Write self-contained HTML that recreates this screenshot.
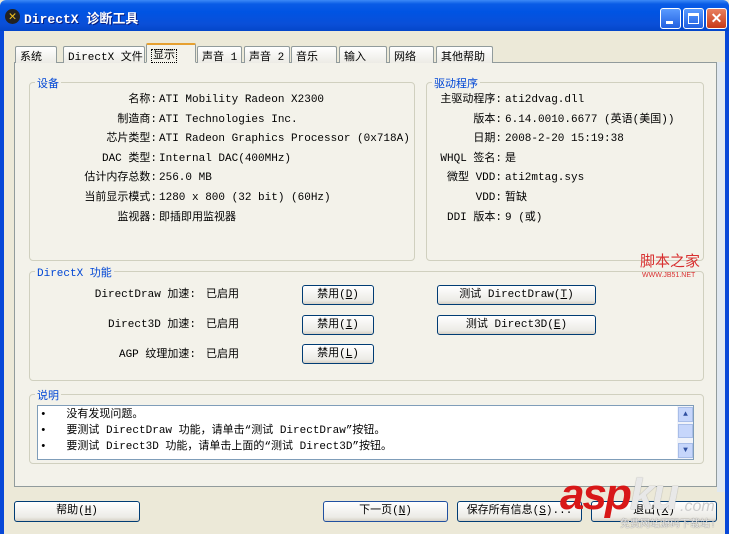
<!DOCTYPE html>
<html><head><meta charset="utf-8"><style>
*{margin:0;padding:0;box-sizing:border-box}
body{width:729px;height:534px;overflow:hidden;background:#ece9d8;position:relative;font-family:"Liberation Mono","Noto Sans CJK SC",monospace;font-size:11px;color:#000}
.a{position:absolute;white-space:nowrap}
#title{left:0;top:0;width:729px;height:31px;background:linear-gradient(#3d8af7 0,#0a5ce6 4px,#0054e3 12px,#0a4fd8 24px,#0446c9 31px);border-radius:6px 6px 0 0}
#bl{left:0;top:31px;width:4px;height:503px;background:#0848d8}
#br{right:0;top:31px;width:4px;height:503px;background:#0848d8}
.tt{color:#fff;font-weight:bold;font-size:13px;font-family:"Liberation Mono","Noto Sans CJK SC",monospace;text-shadow:1px 1px #0a1e80}
.wb{top:8px;width:21px;height:21px;border:1px solid #fff;border-radius:3px;background:linear-gradient(#5a9bff,#2160e0)}
.tab{top:46px;height:17px;border:1px solid #919b9c;border-bottom:none;background:linear-gradient(#fff,#ecebe5);padding:1px 4px 0;border-radius:2px 2px 0 0}
#panel{left:14px;top:62px;width:703px;height:425px;border:1px solid #919b9c;background:#f3f2ea}
.grp{border:1px solid #d0d0bf;border-radius:4px}
.gt{color:#0046d5;background:#f3f2ea;padding:0 2px}
.r{text-align:right}
.btn{border:1px solid #003c74;border-radius:3px;background:linear-gradient(#fff,#ecebe6 80%,#d6d0c5);text-align:center;line-height:18px}
</style></head><body>
<div class="a" id="title"></div>
<div class="a" style="left:5px;top:9px;width:15px;height:15px;border-radius:50%;background:#222;color:#f0c020;font-size:13px;line-height:15px;text-align:center;font-weight:bold">✕</div>
<div class="a tt" style="left:24px;top:8px">DirectX 诊断工具</div>
<div class="a wb" style="left:660px"><div style="position:absolute;left:5px;top:12px;width:7px;height:3px;background:#fff"></div></div>
<div class="a wb" style="left:683px"><div style="position:absolute;left:4px;top:4px;width:11px;height:11px;border:1px solid #fff;border-top-width:3px"></div></div>
<div class="a wb" style="left:706px;background:linear-gradient(#e88060,#c83a18);color:#fff;font-weight:bold;text-align:center;line-height:19px;font-size:14px;font-family:'Liberation Sans',sans-serif">✕</div>
<div class="a" id="bl"></div><div class="a" id="br"></div>
<div class="a" id="panel"></div>
<div class="a" style="left:717px;top:62px;width:8px;height:430px;background:#e0e8f0"></div>
<div class="a tab" style="left:15px;width:42px">系统</div>
<div class="a tab" style="left:63px;width:82px">DirectX 文件</div>
<div class="a tab" style="left:146px;width:50px;top:43px;height:20px;background:#f3f2ea;border-top:2px solid #e6a030;border-bottom:1px solid #f3f2ea"><span style="border:1px dotted #000;padding:0 1px">显示</span></div>
<div class="a tab" style="left:197px;width:45px">声音 1</div>
<div class="a tab" style="left:244px;width:46px">声音 2</div>
<div class="a tab" style="left:291px;width:46px">音乐</div>
<div class="a tab" style="left:339px;width:48px">输入</div>
<div class="a tab" style="left:389px;width:45px">网络</div>
<div class="a tab" style="left:436px;width:57px">其他帮助</div>

<div class="a grp" style="left:29px;top:82px;width:386px;height:179px"></div>
<div class="a gt" style="left:35px;top:75px">设备</div>
<div class="a grp" style="left:426px;top:82px;width:278px;height:179px"></div>
<div class="a gt" style="left:432px;top:75px">驱动程序</div>
<div class="a grp" style="left:29px;top:271px;width:675px;height:110px"></div>
<div class="a gt" style="left:35px;top:264px">DirectX 功能</div>
<div class="a grp" style="left:29px;top:394px;width:675px;height:70px"></div>
<div class="a gt" style="left:35px;top:387px">说明</div>

<div class="a r" style="left:40px;top:91px;width:117px;line-height:19.6px">名称:<br>制造商:<br>芯片类型:<br>DAC 类型:<br>估计内存总数:<br>当前显示模式:<br>监视器:</div>
<div class="a" style="left:159px;top:91px;line-height:19.6px">ATI Mobility Radeon X2300<br>ATI Technologies Inc.<br>ATI Radeon Graphics Processor (0x718A)<br>Internal DAC(400MHz)<br>256.0 MB<br>1280 x 800 (32 bit) (60Hz)<br>即插即用监视器</div>
<div class="a r" style="left:420px;top:91px;width:82px;line-height:19.6px">主驱动程序:<br>版本:<br>日期:<br>WHQL 签名:<br>微型 VDD:<br>VDD:<br>DDI 版本:</div>
<div class="a" style="left:505px;top:91px;line-height:19.6px">ati2dvag.dll<br>6.14.0010.6677 (英语(美国))<br>2008-2-20 15:19:38<br>是<br>ati2mtag.sys<br>暂缺<br>9 (或)</div>

<div class="a r" style="left:60px;top:281px;width:136px;line-height:29.8px">DirectDraw 加速:<br>Direct3D 加速:<br>AGP 纹理加速:</div>
<div class="a" style="left:206px;top:281px;line-height:29.8px">已启用<br>已启用<br>已启用</div>
<div class="a btn" style="left:302px;top:285px;width:72px;height:20px">禁用(<u>D</u>)</div>
<div class="a btn" style="left:302px;top:315px;width:72px;height:20px">禁用(<u>I</u>)</div>
<div class="a btn" style="left:302px;top:344px;width:72px;height:20px">禁用(<u>L</u>)</div>
<div class="a btn" style="left:437px;top:285px;width:159px;height:20px">测试 DirectDraw(<u>T</u>)</div>
<div class="a btn" style="left:437px;top:315px;width:159px;height:20px">测试 Direct3D(<u>E</u>)</div>
<div class="a" style="left:640px;top:250px;color:#d83030;font-family:'Noto Sans CJK SC',sans-serif;font-size:15px">脚本之家</div>
<div class="a" style="left:642px;top:272px;color:#d83030;font-family:'Liberation Sans',sans-serif;font-size:7px">WWW.JB51.NET</div>

<div class="a" style="left:37px;top:405px;width:657px;height:55px;background:#fff;border:1px solid #7f9db9"></div>
<div class="a" style="left:40px;top:407px;line-height:16px">•&nbsp;&nbsp;&nbsp;没有发现问题。<br>•&nbsp;&nbsp;&nbsp;要测试 DirectDraw 功能，请单击“测试 DirectDraw”按钮。<br>•&nbsp;&nbsp;&nbsp;要测试 Direct3D 功能，请单击上面的“测试 Direct3D”按钮。</div>
<div class="a" style="left:677px;top:406px;width:16px;height:53px;background:#f0f3fa"></div>
<div class="a" style="left:678px;top:407px;width:15px;height:15px;background:#c6d6fb;border:1px solid #a8bde8;color:#3050a0;font-size:8px;text-align:center;line-height:13px">▲</div>
<div class="a" style="left:678px;top:424px;width:15px;height:14px;background:#c6d6fb;border:1px solid #a8bde8"></div>
<div class="a" style="left:678px;top:443px;width:15px;height:15px;background:#c6d6fb;border:1px solid #a8bde8;color:#3050a0;font-size:8px;text-align:center;line-height:13px">▼</div>

<div class="a btn" style="left:14px;top:501px;width:126px;height:21px">帮助(<u>H</u>)</div>
<div class="a btn" style="left:323px;top:501px;width:125px;height:21px;border-color:#2050a0">下一页(<u>N</u>)</div>
<div class="a btn" style="left:457px;top:501px;width:125px;height:21px">保存所有信息(<u>S</u>)...</div>
<div class="a btn" style="left:591px;top:501px;width:126px;height:21px">退出(<u>X</u>)</div>
<div class="a" style="left:560px;top:470px;color:#d81818;font-family:'Liberation Sans',sans-serif;font-weight:bold;font-style:italic;font-size:44px;letter-spacing:-2px">asp<span style="color:#e8e8e8;text-shadow:0 0 1px #888">ku</span></div>
<div class="a" style="left:680px;top:498px;color:#ccc;font-family:'Liberation Sans',sans-serif;font-style:italic;font-size:16px">.com</div>
<div class="a" style="left:620px;top:515px;color:#eee;font-size:10px;text-shadow:0 0 1px #555">免费网站源码下载站!</div>
</body></html>
